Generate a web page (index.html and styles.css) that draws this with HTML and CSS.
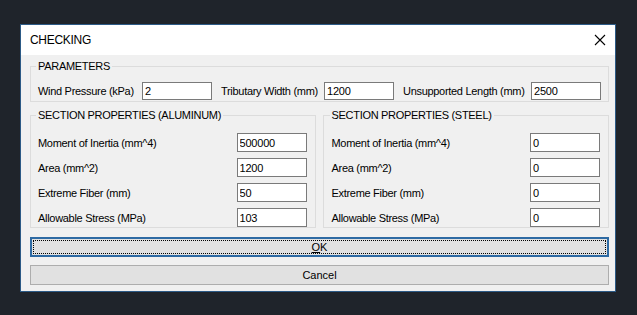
FILE: index.html
```html
<html>
<head>
<title>CHECKING</title>
<link rel="stylesheet" href="styles.css">
<meta http-equiv="Content-Type" content="text/html; charset=UTF-8" >
</head>
<body>
<div class="window">
  <div class="title-bar">
    <div class="title-text">CHECKING</div>
    <svg class="close-icon" width="12" height="12" viewBox="0 0 12 12">
      <path d="M1 1 L11 11 M11 1 L1 11" stroke="#000" stroke-width="1.1" fill="none"/>
    </svg>
  </div>
  <div class="client">
    <fieldset class="group params">
      <legend>PARAMETERS</legend>
      <div class="param-row">
        <label class="param-label w1">Wind Pressure (kPa)</label>
        <input class="text-box" type="text" value="2">
        <label class="param-label w2">Tributary Width (mm)</label>
        <input class="text-box" type="text" value="1200">
        <label class="param-label w3">Unsupported Length (mm)</label>
        <input class="text-box" type="text" value="2500">
      </div>
    </fieldset>
    <div class="sections">
      <fieldset class="group section">
        <legend>SECTION PROPERTIES (ALUMINUM)</legend>
        <div class="prop-row"><label>Moment of Inertia (mm^4)</label><input class="text-box tall" type="text" value="500000"></div>
        <div class="prop-row"><label>Area (mm^2)</label><input class="text-box tall" type="text" value="1200"></div>
        <div class="prop-row"><label>Extreme Fiber (mm)</label><input class="text-box tall" type="text" value="50"></div>
        <div class="prop-row"><label>Allowable Stress (MPa)</label><input class="text-box tall" type="text" value="103"></div>
      </fieldset>
      <fieldset class="group section">
        <legend>SECTION PROPERTIES (STEEL)</legend>
        <div class="prop-row"><label>Moment of Inertia (mm^4)</label><input class="text-box tall" type="text" value="0"></div>
        <div class="prop-row"><label>Area (mm^2)</label><input class="text-box tall" type="text" value="0"></div>
        <div class="prop-row"><label>Extreme Fiber (mm)</label><input class="text-box tall" type="text" value="0"></div>
        <div class="prop-row"><label>Allowable Stress (MPa)</label><input class="text-box tall" type="text" value="0"></div>
      </fieldset>
    </div>
    <button class="push-button default-button"><u>O</u>K</button>
    <button class="push-button">Cancel</button>
  </div>
</div>
</body>
</html>
```
FILE: styles.css
```css
body {
 margin: 0;
 padding: 24px 0 0 20px;
 background-color: #1f242b;
 font-family: "Liberation Sans", Arial, sans-serif;
 font-size: 11px;
 letter-spacing: -0.3px;
 color: #000000;
}
.window {
 width: 594px;
 height: 266px;
 border: 1px solid #2c5a86;
 background-color: #f0f0f0;
 display: flex;
 flex-direction: column;
}
.title-bar {
 height: 30px;
 background-color: #ffffff;
 display: flex;
 align-items: center;
 justify-content: space-between;
 padding: 0 9px 0 9px;
}
.title-text {
 font-size: 12px;
}
.client {
 padding: 5px 6px 0 9px;
 display: flex;
 flex-direction: column;
}
.group {
 margin: 0;
 border: 1px solid #dcdcdc;
 padding: 0 7px;
 min-width: 0;
 white-space: nowrap;
}
.group legend {
 padding: 0 2px;
 margin-left: -2px;
 line-height: 13px;
 font-size: 11px;
}
.params {
 padding-bottom: 1px;
}
.param-row {
 display: flex;
 align-items: center;
 padding-top: 9px;
}
.param-label {
 flex: none;
}
.w1 { width: 104px; }
.w2 { width: 103px; margin-left: 9px; }
.w3 { width: 128px; margin-left: 9px; }
.text-box {
 width: 70px;
 height: 18px;
 box-sizing: border-box;
 border: 1px solid #7a7a7a;
 background-color: #ffffff;
 padding: 0 2px;
 margin: 0;
 font-family: "Liberation Sans", Arial, sans-serif;
 font-size: 11px;
 letter-spacing: -0.2px;
 color: #000000;
}
.text-box.tall {
 height: 19px;
}
.sections {
 display: flex;
 gap: 7px;
 margin-top: 7px;
}
.section {
 flex: 1;
 padding: 0 8px 0 7px;
}
.section + .section {
 padding-left: 8px;
}
.prop-row {
 display: flex;
 align-items: center;
 justify-content: space-between;
 height: 19px;
 margin-top: 6px;
}
.section .prop-row:first-of-type {
 margin-top: 11px;
}
.push-button {
 height: 20px;
 margin: 0;
 border: 1px solid #adadad;
 background-color: #e1e1e1;
 font-family: "Liberation Sans", Arial, sans-serif;
 font-size: 11px;
 color: #000000;
 padding: 0;
}
.default-button {
 margin-top: 9px;
 border: 2px solid #2e6aa3;
 outline: 1px dotted #000000;
 outline-offset: -4px;
}
.default-button + .push-button {
 margin-top: 8px;
}
```
